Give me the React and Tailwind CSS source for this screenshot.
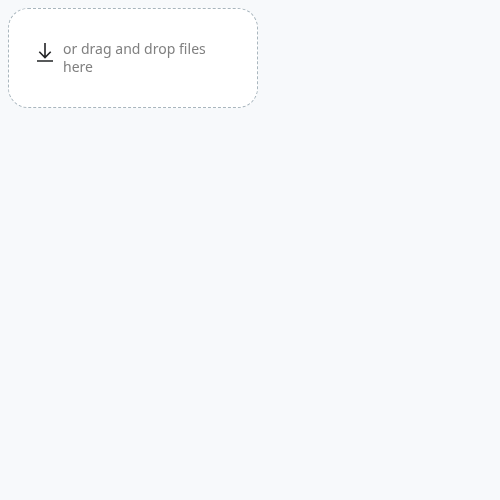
export default function App() {
  return (
    <div className="min-h-screen bg-[#f7f9fb] p-2">
      <div className="flex h-[100px] w-[250px] items-start rounded-[20px] border border-dashed border-[#a9b6be] bg-white pt-[31px] pl-[27px]">
        <svg className="mt-[2px] mr-[9px] h-[22px] w-[18px] shrink-0" viewBox="0 0 18 22" fill="none" stroke="#222426" strokeWidth="1.6">
          <path d="M9 1v14.500M3.300 9.800 9 15.500l5.700-5.700M1 19h16" />
        </svg>
        <p className="w-[160px] font-['Noto_Sans',sans-serif] text-[14px] leading-[18px] tracking-[0.02px] text-[#808080] will-change-transform">
          or drag and drop files here
        </p>
      </div>
    </div>
  );
}
